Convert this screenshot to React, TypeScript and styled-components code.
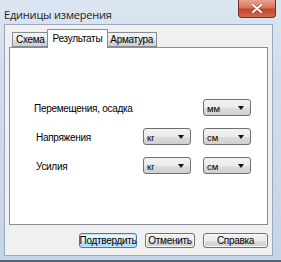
import React from 'react'
import styled, { createGlobalStyle } from 'styled-components'

const Global = createGlobalStyle`
  html, body { margin: 0; padding: 0; background: #fff; }
  * { box-sizing: border-box; }
`

const Window = styled.div`
  width: 281px;
  height: 262px;
  display: flex;
  flex-direction: column;
  background: linear-gradient(180deg, #dce6f2 0%, #cfdcea 30%, #c6d5e6 100%);
  border-bottom: 2px solid #55657a;
  font-family: 'Liberation Sans', Arial, sans-serif;
  color: #000;
  overflow: hidden;
  white-space: nowrap;
`

const TitleBar = styled.div`
  height: 23px;
  display: flex;
  align-items: flex-start;
  justify-content: space-between;
  padding-left: 4px;
`

const Title = styled.span`
  font-family: 'Open Sans', 'Noto Sans', sans-serif;
  font-size: 11px;
  letter-spacing: -0.2px;
  line-height: 1;
  margin-top: 9px;
  color: #1e1e1e;
`

const CloseButton = styled.div`
  width: 38px;
  height: 18px;
  margin-right: 5px;
  border: 1px solid #7a2a22;
  border-top: none;
  border-radius: 0 0 4px 4px;
  background: linear-gradient(180deg, #e6a491 0%, #d7735c 45%, #c2452d 55%, #cf6a4d 100%);
  display: flex;
  align-items: center;
  justify-content: center;
`

const Client = styled.div`
  flex: 1;
  margin: 1px 8px 4px 4px;
  background: #f0f0f0;
  border: 1px solid #9aa9bd;
  display: flex;
  flex-direction: column;
  padding: 4px 4px 0 4px;
`

const TabRow = styled.div`
  display: flex;
  align-items: flex-end;
  padding-left: 3px;
  height: 18px;
  position: relative;
  z-index: 1;
`

const Tab = styled.div<{ $active?: boolean }>`
  height: ${(p) => (p.$active ? '19px' : '15px')};
  padding: ${(p) => (p.$active ? '3px 5px 0' : '1px 3px 0')};
  margin: ${(p) => (p.$active ? '0 -2px -1px' : '0')};
  border: 1px solid #898c95;
  border-bottom: ${(p) => (p.$active ? 'none' : '1px solid #898c95')};
  background: ${(p) =>
    p.$active ? '#ffffff' : 'linear-gradient(180deg, #f3f3f3 0%, #ebebeb 50%, #dddddd 51%, #cfcfcf 100%)'};
  font-size: 10px;
  letter-spacing: -0.3px;
  line-height: 12px;
  position: relative;
  z-index: ${(p) => (p.$active ? 2 : 1)};
`

const Panel = styled.div`
  height: 178px;
  background: #fff;
  border: 1px solid #898c95;
  display: grid;
  grid-template-columns: 97px 48px 48px;
  column-gap: 12px;
  row-gap: 12px;
  grid-auto-rows: 17px;
  align-content: start;
  padding: 51px 0 0 24px;
`

const Label = styled.div<{ $indent?: number }>`
  font-size: 10px;
  letter-spacing: -0.3px;
  line-height: 17px;
  padding-left: ${(p) => p.$indent ?? 0}px;
  padding-top: 1px;
`

const Select = styled.div<{ $col: number }>`
  grid-column: ${(p) => p.$col};
  height: 17px;
  border: 1px solid #707070;
  border-radius: 3px;
  background: linear-gradient(180deg, #f2f2f2 0%, #ebebeb 50%, #dddddd 51%, #cfcfcf 100%);
  display: flex;
  align-items: center;
  justify-content: space-between;
  padding: 2px 6px 0 3px;
  font-size: 9.5px;
`

const Arrow = styled.span`
  width: 0;
  height: 0;
  margin-top: -1px;
  border-left: 3.5px solid transparent;
  border-right: 3.5px solid transparent;
  border-top: 4px solid #111;
`

const ButtonRow = styled.div`
  display: flex;
  justify-content: flex-end;
  gap: 8px;
  padding-top: 8px;
`

const Button = styled.div<{ $w: number; $focused?: boolean }>`
  width: ${(p) => p.$w}px;
  height: 15px;
  border: 1px solid ${(p) => (p.$focused ? '#3c7fb1' : '#707070')};
  border-radius: 3px;
  background: ${(p) =>
    p.$focused
      ? 'linear-gradient(180deg, #eaf6fd 0%, #d9f0fc 50%, #bee6fd 51%, #a7d9f5 100%)'
      : 'linear-gradient(180deg, #f2f2f2 0%, #ebebeb 50%, #dddddd 51%, #cfcfcf 100%)'};
  box-shadow: ${(p) => (p.$focused ? 'inset 0 0 0 1px #c7e6f8' : 'inset 0 0 0 1px #fbfbfb')};
  display: flex;
  align-items: center;
  justify-content: center;
  font-size: 10px;
  letter-spacing: -0.3px;
  line-height: 1;
`

function CloseIcon() {
  return (
    <svg width="10" height="9" viewBox="0 0 10 9">
      <path d="M1 1 L9 8 M9 1 L1 8" stroke="#5a1a12" strokeWidth="3" strokeLinecap="round" opacity="0.5" />
      <path d="M1 1 L9 8 M9 1 L1 8" stroke="#ffffff" strokeWidth="2" strokeLinecap="round" />
    </svg>
  )
}

export default function App() {
  return (
    <>
      <Global />
      <Window>
        <TitleBar>
          <Title>Единицы измерения</Title>
          <CloseButton>
            <CloseIcon />
          </CloseButton>
        </TitleBar>
        <Client>
          <TabRow>
            <Tab>Схема</Tab>
            <Tab $active>Результаты</Tab>
            <Tab>Арматура</Tab>
          </TabRow>
          <Panel>
            <Label>Перемещения, осадка</Label>
            <Select $col={3}>мм<Arrow /></Select>

            <Label $indent={2}>Напряжения</Label>
            <Select $col={2}>кг<Arrow /></Select>
            <Select $col={3}>см<Arrow /></Select>

            <Label $indent={2}>Усилия</Label>
            <Select $col={2}>кг<Arrow /></Select>
            <Select $col={3}>см<Arrow /></Select>
          </Panel>
          <ButtonRow>
            <Button $w={58} $focused>Подтвердить</Button>
            <Button $w={50}>Отменить</Button>
            <Button $w={65}>Справка</Button>
          </ButtonRow>
        </Client>
      </Window>
    </>
  )
}
